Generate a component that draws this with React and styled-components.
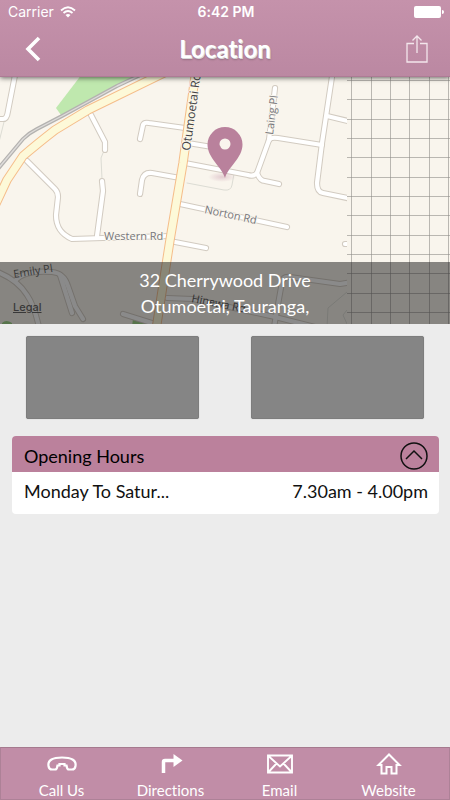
import React, { useState } from 'react'
import styled, { createGlobalStyle } from 'styled-components'

const GlobalStyle = createGlobalStyle`
    * {
        box-sizing: border-box;
    }
    body {
        margin: 0;
        background: #ececec;
        font-family: Lato, "Liberation Sans", sans-serif;
        font-variant-ligatures: none;
    }
    button {
        font: inherit;
        color: inherit;
        background: none;
        border: 0;
        padding: 0;
        cursor: pointer;
    }
    a {
        color: inherit;
    }
    svg {
        display: block;
    }
`;

const Page = styled.div`
    min-height: 100vh;
    display: flex;
    flex-direction: column;
`;
const Header = styled.header`
    position: relative;
    z-index: 1;
    height: 77px;
    color: #fff;
    background: linear-gradient(#c592ab, #bb88a2);
    border-bottom: 1px solid #ad7b95;
    box-shadow: 0 1px 5px rgba(0, 0, 0, 0.6);
`;
const StatusBar = styled.div`
    height: 24px;
    padding: 0 6px 0 8px;
    display: grid;
    grid-template-columns: 1fr auto 1fr;
    align-items: center;
    font-family: Inter, sans-serif;
    font-size: 14px;
    line-height: 24px;
`;
const Carrier = styled.div`
    display: flex;
    align-items: center;
    gap: 6px;
`;
const Clock = styled.div`
    font-weight: 600;
`;
const Battery = styled.div`
    justify-self: end;
`;
const NavBar = styled.div`
    height: 50px;
    padding: 0 17px;
    display: grid;
    grid-template-columns: 32px 1fr 32px;
    align-items: center;
`;
const NavButton = styled.button`
    width: 32px;
    height: 40px;
    display: flex;
    align-items: center;
    justify-content: center;
`;
const Title = styled.h1`
    margin: 0;
    text-align: center;
    font-size: 24px;
    line-height: 32px;
    font-weight: 700;
    text-shadow: 1px 1px 0 #d9d9d9, 1px 2px 2px rgba(0, 0, 0, 0.2);
`;

const MapBox = styled.section`
    position: relative;
    height: 247px;
    background: #f9f5ed;
`;
const MapImage = styled.svg`
    width: 100%;
    height: 100%;
`;
const Legal = styled.a`
    position: absolute;
    left: 13px;
    bottom: 10px;
    font-family: Inter, sans-serif;
    font-size: 11px;
    line-height: 14px;
    font-weight: 500;
    color: #555;
`;
const Address = styled.address`
    position: absolute;
    left: 0;
    right: 0;
    bottom: 0;
    height: 62px;
    padding: 5px 0;
    background: rgba(30, 30, 30, 0.52);
    color: #fff;
    text-align: center;
    font-style: normal;
    font-size: 18px;
    line-height: 26px;
    pointer-events: none;
`;

const Photos = styled.div`
    padding: 12px 26px 0;
    display: grid;
    grid-template-columns: 1fr 1fr;
    gap: 52px;
`;
const Photo = styled.div`
    height: 83px;
    background: #858585;
    border: 1px solid #7d7d7d;
    border-radius: 2px;
    box-shadow: 0 0 1px #aaa;
`;
const Card = styled.section`
    margin: 17px 11px 0 12px;
    background: #fff;
    border-radius: 4px;
    overflow: hidden;
`;
const CardHead = styled.button`
    width: 100%;
    height: 36px;
    padding: 4px 11px 0 12px;
    display: flex;
    align-items: center;
    justify-content: space-between;
    background: #bb819c;
    color: #000;
    font-size: 18px;
    line-height: 24px;
`;
const Arrow = styled.svg`
    transform: ${props => props.$open ? 'none' : 'rotate(180deg)'};
`;
const Hours = styled.dl`
    margin: 0;
    height: 42px;
    padding: 7px 11px 0 12px;
    display: flex;
    justify-content: space-between;
    color: #111;
    font-size: 18px;
    line-height: 24px;
`;
const Day = styled.dt`
    margin: 0;
`;
const Time = styled.dd`
    margin: 0;
`;

const TabBar = styled.nav`
    height: 53px;
    margin-top: auto;
    padding: 0 6px;
    display: grid;
    grid-template-columns: repeat(4, 1fr);
    background: #c18da7;
    border: 1px solid #ad8197;
    border-top: 1px solid #a57a8e;
    color: #fff;
`;
const Tab = styled.a`
    display: flex;
    flex-direction: column;
    align-items: center;
    text-decoration: none;
    font-size: 15px;
    line-height: 20px;
`;
const TabIcon = styled.svg`
    width: 32px;
    height: 32px;
`;

const roads = [
    'M16 70L8 111Q7 119 3 119L-5 119',
    'M91 115L105 142V150',
    'M102 181L103 191L97 236',
    'M27 161L55 189Q58 192 58 197L56 215C56 229 63 235 72 239L103 238L170 236',
    'M140 139L143 125Q144 122 149 123L185 128',
    'M140 194L142 180Q144 172 152 173L180 178',
    'M188 143L218 148',
    'M185 163L248 175Q254 177 257 173L269 140L275 88',
    'M257 173Q260 181 265 181L279 184',
    'M269 140Q271 137 278 138L322 145',
    'M333 70L322 143L317 183Q317 192 323 193L352 199',
    'M327 116L352 122',
    'M180 204L287 227',
    'M175 242L206 248',
    'M345 244H350',
    'M167 298L193 299L275 317L315 327',
    'M274 327L282 282Q283 276 290 277L340 284L352 282',
    'M-5 271Q17 279 27 295Q34 305 39 327',
    'M15 281Q24 270 52 272Q64 273 68 286L75 306L83 319',
    'M60 275L72 313',
    'M123 314L155 324',
]

const lanes = 'M4 122L-2 146M103 153L101 158L102 179M187 183L224 190Q231 191 232 185L234 174M347 292L328 308L327 327M347 310L343 315L347 324'
const highway = 'M170 70L88 110L55 130Q37 144 23 156L7 180L-8 212'
const mainRoad = 'M196 70L183 163L170 240L156 330'
const railway = 'M151 70L117 86L62 116L37 129Q29 133 23 139L-3 170'

const gridX = [351, 371, 390, 409, 429, 448]
const gridY = [80, 99, 119, 138, 157, 177, 196, 215, 235, 254, 273, 293, 312]

function StreetMap() {
    return (
        <MapImage viewBox="0 77 450 247" preserveAspectRatio="xMidYMid slice" role="img" aria-label="Map">
            <defs>
                <clipPath id="tile"><rect x="0" y="70" width="347" height="260" /></clipPath>
                <radialGradient id="glow">
                    <stop offset="0" stopColor="#b9819c" stopOpacity="0.35" />
                    <stop offset="1" stopColor="#b9819c" stopOpacity="0" />
                </radialGradient>
            </defs>
            <g clipPath="url(#tile)" fill="none" strokeLinecap="round" strokeLinejoin="round">
                <path d="M82 74H142L61 115L56 108Z" fill="#bfe8ae" />
                <path d="M2 323Q6 319 12 323V325H2ZM133 319L154 324V326H132Z" fill="#94d27b" />
                <path d={lanes} stroke="#dcdcd4" />
                {roads.map(d => <path key={d} d={d} stroke="#d2cbc1" strokeWidth="6.2" />)}
                {roads.map(d => <path key={d} d={d} stroke="#fff" strokeWidth="4.2" />)}
                <path d={railway} stroke="#b4b2b0" strokeWidth="3.8" />
                <path d={railway} stroke="#dedcda" strokeWidth="1.4" />
                <path d={highway} stroke="#f5bd8a" strokeWidth="9.4" />
                <path d={mainRoad} stroke="#f5bd8a" strokeWidth="9.4" />
                <path d={highway} stroke="#fdf9d8" strokeWidth="7.4" />
                <path d={mainRoad} stroke="#fdf9d8" strokeWidth="7.4" />
            </g>
            <g stroke="#8f8d88" strokeOpacity="0.6">
                {gridX.map(x => <path key={x} d={`M${x + 0.5} 77V324`} />)}
                {gridY.map(y => <path key={y} d={`M347 ${y + 0.5}H450`} />)}
            </g>
            <g
                fill="#77777b"
                stroke="#f9f5ed"
                strokeWidth="2"
                paintOrder="stroke"
                strokeLinejoin="round"
                fontFamily="'Open Sans', sans-serif"
                fontSize="11"
            >
                <text transform="translate(190 151) rotate(-82)" fill="#444" fontSize="12">Otumoetai Rd</text>
                <text transform="translate(273 135) rotate(-83)">Laing Pl</text>
                <text transform="translate(204 213) rotate(12)">Norton Rd</text>
                <text x="104" y="240">Western Rd</text>
                <text transform="translate(14 278) rotate(-9)" stroke="none" fill="#555">Emily Pl</text>
                <text transform="translate(191 302) rotate(11)" stroke="none" fill="#444">Hinewa Rd</text>
            </g>
            <ellipse cx="222" cy="177" rx="14" ry="5" fill="url(#glow)" />
            <path
                d="M225 178C222 167 207.500 158 207.500 144.500A17.500 17.500 0 0 1 242.500 144.500C242.500 158 228 167 225 178ZM225 138.500A5.500 5.500 0 1 0 225 149.500A5.500 5.500 0 1 0 225 138.500Z"
                fill="#b9819c"
                fillRule="evenodd"
            />
        </MapImage>
    )
}

const tabs = [
    {
        label: 'Call Us',
        href: '#call',
        icon: <path d="M2.500 18C1.500 12 7 9.500 16 9.500S30.500 12 29.500 18Q29 21.500 26 21.500H23Q21 21.500 20.500 17.500H18.500V16H13.500V17.500H11.500Q11 21.500 9 21.500H6Q3 21.500 2.500 18Z" strokeWidth="2.200" />,
    },
    {
        label: 'Directions',
        href: '#directions',
        icon: <g><path d="M8.500 25V14Q8.500 12.500 10 12.500H19" strokeWidth="3.500" /><path d="M18.500 6L27.500 12.500L18.500 19Z" fill="#fff" stroke="none" /></g>,
    },
    {
        label: 'Email',
        href: '#email',
        icon: <path d="M4 7.500H28V24.500H4ZM5 8.500L16 18.500L27 8.500M5 23.500L12.500 15.500M27 23.500L19.500 15.500" strokeWidth="1.900" />,
    },
    {
        label: 'Website',
        href: '#website',
        icon: <path d="M5.500 17L16 6.500L26.500 17H23.500V25.500H18.500V19H13.500V25.500H8.500V17Z" strokeWidth="2" />,
    },
]

function App() {
    const [open, setOpen] = useState(true)

    return (
        <Page>
            <GlobalStyle />
            <Header>
                <StatusBar>
                    <Carrier>
                        Carrier
                        <svg width="16" height="12" viewBox="0 0 16 12" fill="none" stroke="#fff" strokeWidth="1.800">
                            <path d="M1 4.500Q8 -2 15 4.500M3.500 7Q8 3 12.500 7" />
                            <path d="M8 11.500L5.500 9Q8 7 10.500 9Z" fill="#fff" stroke="none" />
                        </svg>
                    </Carrier>
                    <Clock>6:42 PM</Clock>
                    <Battery>
                        <svg width="30" height="12" viewBox="0 0 30 12" fill="#fff">
                            <rect width="27" height="12" rx="2" />
                            <path d="M28 4Q30 4 30 6T28 8Z" />
                        </svg>
                    </Battery>
                </StatusBar>
                <NavBar>
                    <NavButton aria-label="Back">
                        <svg width="16" height="26" viewBox="0 0 16 26" fill="none" stroke="#fff" strokeWidth="3.600">
                            <path d="M14 2L3 13L14 24" />
                        </svg>
                    </NavButton>
                    <Title>Location</Title>
                    <NavButton aria-label="Share">
                        <svg width="22" height="28" viewBox="0 0 22 28" fill="none" stroke="#f3e6ec" strokeWidth="1.300">
                            <path d="M8 8.500H1V27H21V8.500H14M11 18V1M6.500 5.500L11 1L15.500 5.500" />
                        </svg>
                    </NavButton>
                </NavBar>
            </Header>

            <MapBox>
                <StreetMap />
                <Legal href="#legal">Legal</Legal>
                <Address>
                    32 Cherrywood Drive<br />
                    Otumoetai, Tauranga,
                </Address>
            </MapBox>

            <Photos>
                <Photo />
                <Photo />
            </Photos>

            <Card>
                <CardHead aria-expanded={open} onClick={() => setOpen(!open)}>
                    Opening Hours
                    <Arrow $open={open} width="28" height="28" viewBox="0 0 28 28" fill="none" stroke="#111" strokeWidth="1.500">
                        <circle cx="14" cy="14" r="13" />
                        <path d="M6 17L14 9L22 17" />
                    </Arrow>
                </CardHead>
                {open &&
                    <Hours>
                        <Day>Monday To Satur...</Day>
                        <Time>7.30am - 4.00pm</Time>
                    </Hours>
                }
            </Card>

            <TabBar>
                {tabs.map(tab => (
                    <Tab key={tab.label} href={tab.href}>
                        <TabIcon viewBox="0 0 32 32" fill="none" stroke="#fff">{tab.icon}</TabIcon>
                        {tab.label}
                    </Tab>
                ))}
            </TabBar>
        </Page>
    )
}

export default App
